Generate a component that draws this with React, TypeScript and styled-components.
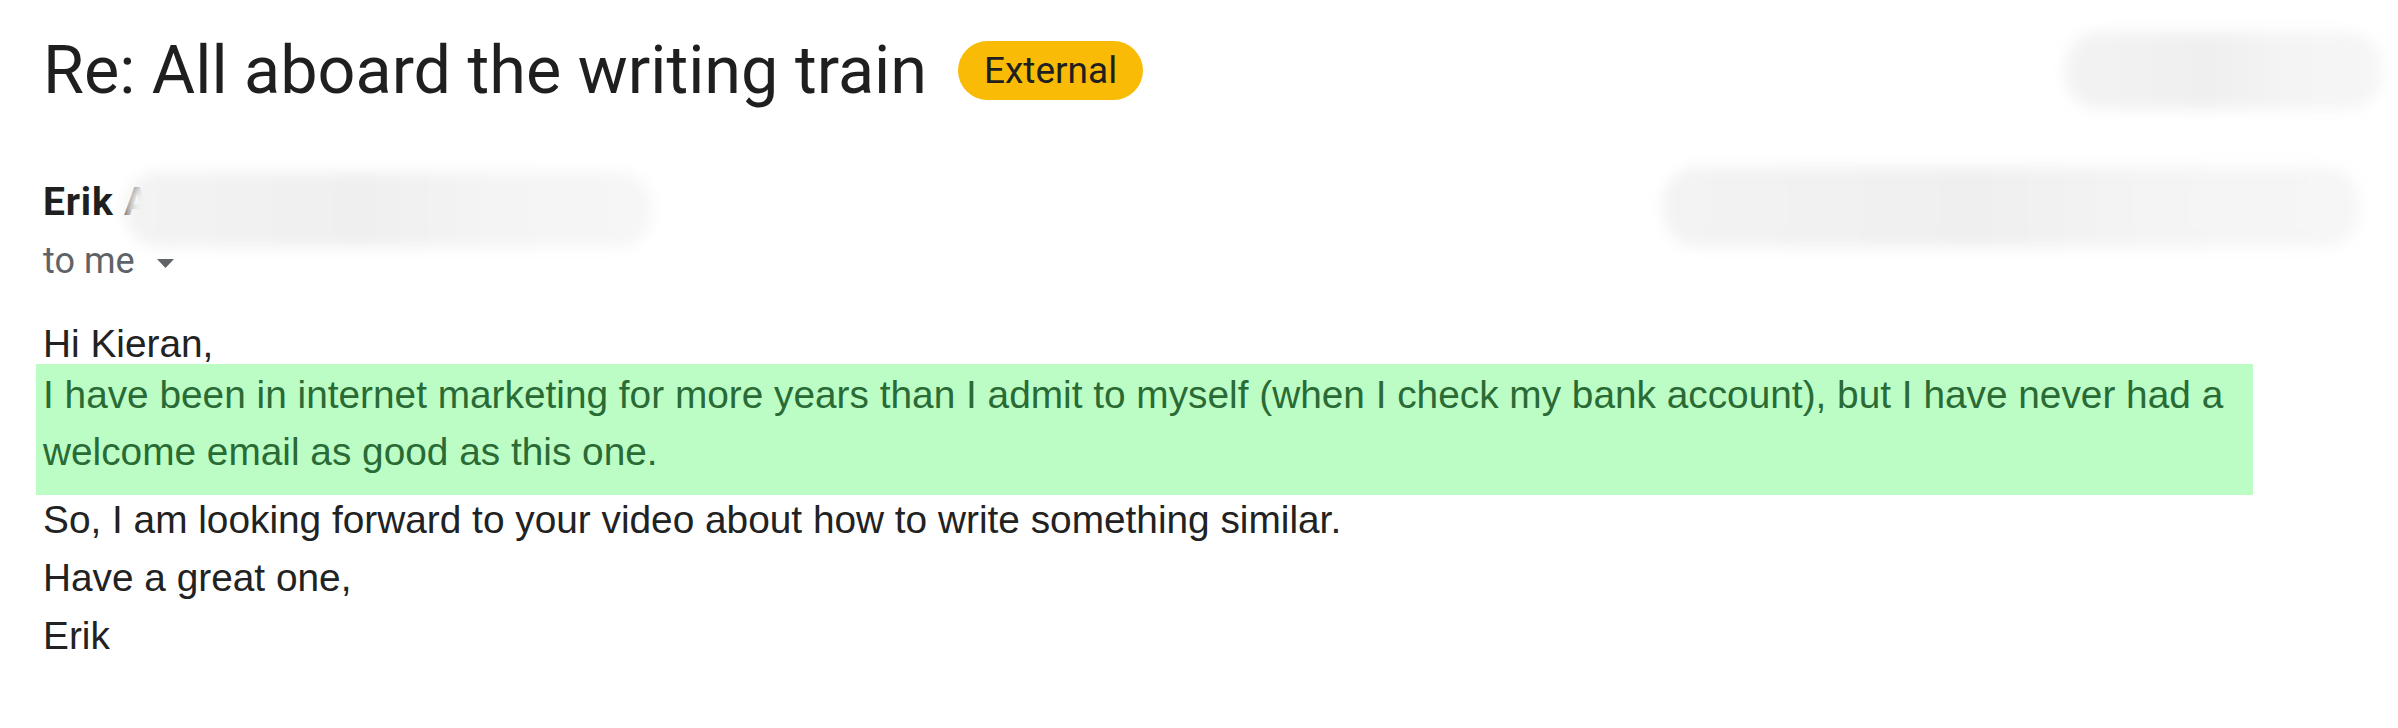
import styled, { createGlobalStyle } from 'styled-components';

const GlobalStyle = createGlobalStyle`
  html, body {
    margin: 0;
    padding: 0;
    background: #fff;
  }
`;

const App = () => {
  return (
    <>
      <GlobalStyle />
      <Page>
        <TitleRow>
          <Title>Re: All aboard the writing train</Title>
          <Badge>External</Badge>
          <Redaction $w={317} $h={77} $push />
        </TitleRow>

        <SenderRow>
          <SenderName>Erik A</SenderName>
          <Redaction $w={527} $h={75} $top={5} $left={-26} />
          <Redaction $w={696} $h={80} $push $right={23} />
        </SenderRow>

        <Recipient>
          to me
          <Caret viewBox="0 0 17 9">
            <path d="M0 0 L17 0 L8.5 9 Z" fill="#5f6368" />
          </Caret>
        </Recipient>

        <Body>
          <Line>Hi Kieran,</Line>
          <Highlight>
            I have been in internet marketing for more years than I admit to
            myself (when I check my bank account), but I have never had a
            welcome email as good as this one.
          </Highlight>
          <Line>So, I am looking forward to your video about how to write something similar.</Line>
          <Line>Have a great one,</Line>
          <Line>Erik</Line>
        </Body>
      </Page>
    </>
  );
};
export default App;

const Page = styled.div`
  width: 2398px;
  height: 728px;
  box-sizing: border-box;
  padding: 30px 16px 0 43px;
  overflow: hidden;
  font-family: Roboto, 'Liberation Sans', Arial, sans-serif;
  color: #202124;
`;

const TitleRow = styled.div`
  display: flex;
  align-items: center;
  height: 80px;
`;

const Title = styled.h1`
  margin: 0 31px 0 0;
  font-family: Roboto, 'Open Sans', sans-serif;
  font-size: 66.5px;
  font-weight: 400;
  line-height: 80px;
  color: #1f1f1f;
  white-space: nowrap;
`;

const Badge = styled.span`
  display: inline-flex;
  align-items: center;
  justify-content: center;
  height: 59px;
  padding: 0 26px;
  border-radius: 30px;
  background: #f9bb06;
  color: #1f1f1f;
  font-family: Roboto, 'Open Sans', sans-serif;
  font-size: 37px;
  font-weight: 400;
  white-space: nowrap;
`;

const Redaction = styled.div<{
  $w: number;
  $h: number;
  $top?: number;
  $left?: number;
  $right?: number;
  $push?: boolean;
}>`
  flex: none;
  width: ${(p) => p.$w}px;
  height: ${(p) => p.$h}px;
  margin-top: ${(p) => p.$top ?? 0}px;
  margin-left: ${(p) => (p.$push ? 'auto' : `${p.$left ?? 0}px`)};
  margin-right: ${(p) => p.$right ?? 0}px;
  border-radius: 34px;
  background: linear-gradient(90deg, #f3f3f3 0%, #efefef 45%, #f4f4f4 70%, #f6f6f6 100%);
  filter: blur(7px);
  position: relative;
`;

const SenderRow = styled.div`
  display: flex;
  align-items: flex-start;
  height: 74px;
  margin-top: 57px;
`;

const SenderName = styled.div`
  margin-top: 13px;
  font-size: 39px;
  font-weight: 700;
  letter-spacing: 0.8px;
  line-height: 44px;
  color: #1f1f1f;
  white-space: nowrap;
`;

const Recipient = styled.div`
  display: flex;
  align-items: center;
  gap: 22px;
  height: 40px;
  font-size: 36px;
  line-height: 40px;
  color: #5f6368;
`;

const Caret = styled.svg`
  width: 17px;
  height: 9px;
  margin-top: 4px;
`;

const Body = styled.div`
  margin-top: 34px;
  font-family: 'Liberation Sans', Arial, sans-serif;
  font-size: 38.8px;
  line-height: 58px;
  color: #222;
`;

const Line = styled.div`
  white-space: nowrap;
`;

const Highlight = styled.div`
  width: 2217px;
  margin: -9px 0 -4px -7px;
  padding: 2px 0 15px 7px;
  box-sizing: border-box;
  background: #bcfdc6;
  color: #2a6b35;
  line-height: 57px;
`;
